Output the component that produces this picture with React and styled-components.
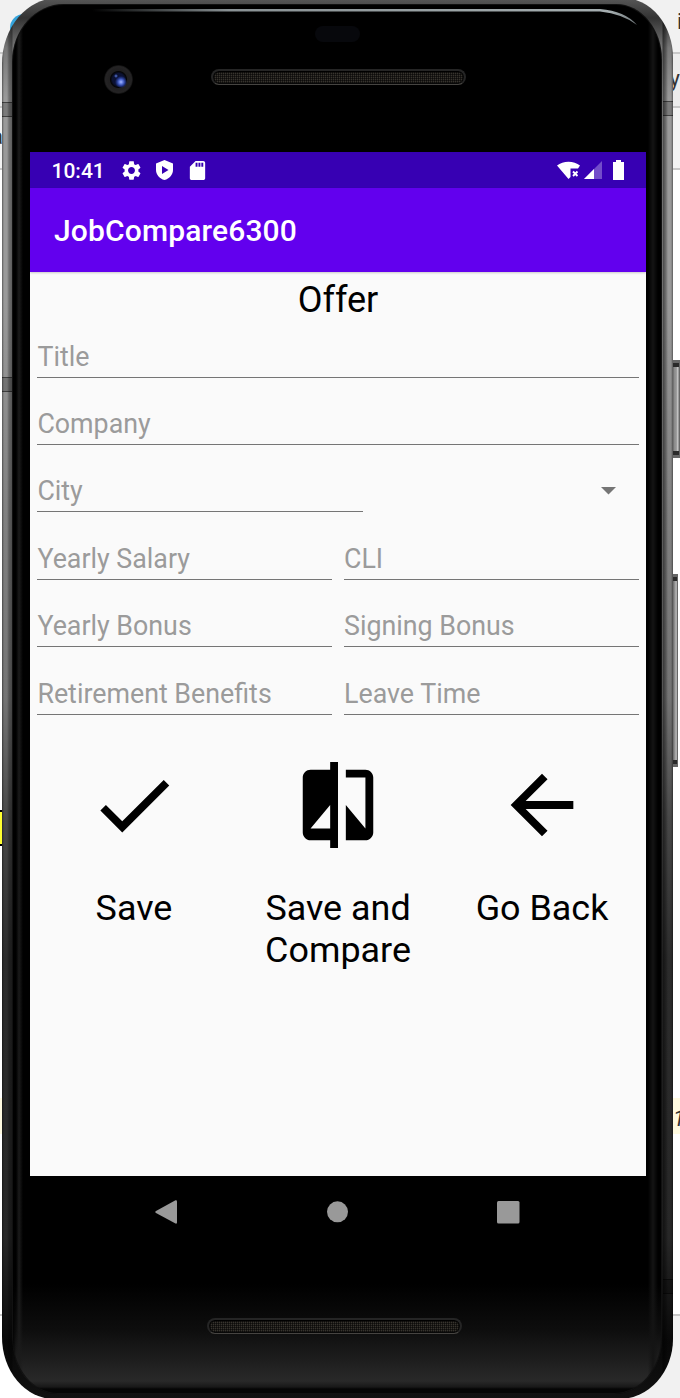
import React from "react";
import styled, { createGlobalStyle } from "styled-components";

const GlobalStyle = createGlobalStyle`
  *, *::before, *::after { box-sizing: border-box; }
  body { margin: 0; background: #fff; font-family: Roboto, "Liberation Sans", sans-serif; }
`;

const Desktop = styled.main`
  display: grid;
  width: 680px;
  height: 1398px;
  overflow: hidden;
  & > * { grid-area: 1 / 1; }
`;

const Backdrop = styled.div`
  display: flex;
  flex-direction: column;
  width: 680px;
`;

const Band = styled.div`
  flex: none;
  display: flex;
  justify-content: space-between;
  align-items: ${(p) => p.$align || "center"};
  height: ${(p) => p.$h}px;
  background: ${(p) => p.$bg || "#fff"};
  border-bottom: ${(p) => (p.$line ? "2px solid #c8c8c8" : "0")};
  font-size: 22px;
  line-height: 22px;
  color: #333;
`;

const AppDot = styled.span`
  width: 28px;
  height: 28px;
  margin: 14px 0 0 10px;
  border-radius: 50%;
  background: #35a4dc;
`;

const Sliver = styled.span`
  display: flex;
  justify-content: ${(p) => (p.$end ? "flex-end" : "flex-start")};
  width: ${(p) => p.$w || 3}px;
  height: 24px;
  margin-top: ${(p) => p.$top || 0}px;
  overflow: hidden;
  font-style: ${(p) => (p.$italic ? "italic" : "normal")};
`;

const Marker = styled.span`
  width: 3px;
  height: 36px;
  background: #ffff30;
  border: solid #000;
  border-width: 2px 0;
`;

const Phone = styled.div`
  position: relative;
  width: 671px;
  height: 1401px;
  margin: -2px 0 0 2px;
  padding: 6px 11px 5px 10px;
  border-radius: 56px 50px 54px 52px / 66px 60px 60px 62px;
  background:
    linear-gradient(90deg, #0006 0, #0000 2px, #0000 5px, #0004 7px, #0006 10px, #0000 11px, #0000 660px, #0008 661px, #0004 664px, #0000 666px, #0000 669px, #0006 671px),
    linear-gradient(#585858 0, #333 20px, #777 50px, #999 100px, #999 300px, #808080 520px, #747474 700px, #484848 820px, #2c2c2c 960px, #272727 1240px, #080808 1345px, #111 1401px);
`;

const Seam = styled.i`
  position: absolute;
  left: ${(p) => p.$x}px;
  top: ${(p) => p.$y}px;
  width: 10px;
  height: 15px;
  background: #0003;
  border: solid #0007;
  border-width: 1px 0;
`;

const SideKey = styled.i`
  position: absolute;
  left: 671px;
  top: ${(p) => p.$y}px;
  width: ${(p) => p.$w}px;
  height: ${(p) => p.$h}px;
  background: linear-gradient(90deg, #666 0, #999 2px, #8c8c8c 50%, #ccc 80%, #777);
  border: solid #666;
  border-width: 3px 1px 3px 0;
  box-shadow: inset 0 4px #2a2a2a, inset 0 -4px #2a2a2a;
`;

const Glass = styled.div`
  position: relative;
  display: flex;
  flex-direction: column;
  align-items: flex-start;
  height: 1390px;
  padding-left: 18px;
  overflow: hidden;
  border-radius: 52px 46px 48px 46px / 58px 56px 56px 56px;
  background:
    linear-gradient(90deg, #000 0, #0000 4px, #1b1b1b 7px, #0000 11px, #0000 636px, #141414 641px, #0000 646px),
    linear-gradient(#000 0, #000 1280px, #0d0d0d 1325px, #1d1d1d 1355px, #292929 1377px, #181818 1383px, #050505 1385px);
  box-shadow: inset 0 0 0 1px #111;
`;

const Shine = styled.svg`
  position: absolute;
  left: 0;
  top: 0;
`;

const TopBezel = styled.header`
  width: 616px;
  height: 148px;
  padding-top: 22px;
`;

const Sensor = styled.div`
  width: 45px;
  height: 16px;
  margin-left: 285px;
  border-radius: 8px;
  background: #07080c;
`;

const EarRow = styled.div`
  display: flex;
  align-items: center;
  gap: 78px;
  height: 28px;
  margin: 23px 0 0 74px;
`;

const Camera = styled.div`
  flex: none;
  width: 29px;
  height: 29px;
  border-radius: 50%;
  background:
    radial-gradient(circle at 17px 17px, #a9baff 0, #5b76dc 2px, #24388c 4px, #0000 6px),
    radial-gradient(circle at 12px 11px, #5a7be0 0, #0000 2px),
    radial-gradient(circle, #0a1034 0, #0c1233 6px, #050505 8px, #201f20 9px, #242324 13px, #0c0c0c 14.5px);
`;

const Speaker = styled.div`
  width: 255px;
  height: 16px;
  margin-bottom: ${(p) => p.$lift || 0}px;
  border: 2px solid #252525;
  border-bottom: 1px solid #464441;
  border-radius: 8px;
  background:
    repeating-linear-gradient(90deg, #0000 0 1px, #0008 1px 2px),
    repeating-linear-gradient(#37342e 0 1px, #1c1a17 1px 2px);
  box-shadow: inset 0 1px 1px #000, inset 0 0 0 1px #080808;
`;

const Screen = styled.section`
  width: 616px;
  height: 1024px;
  background: #fafafa;
`;

const StatusBar = styled.div`
  display: flex;
  align-items: center;
  height: 36px;
  padding: 0 22px 0 21.5px;
  background: #3700b3;
  color: #fff;
`;

const Clock = styled.span`
  width: 68.5px;
  font-size: 21px;
  font-weight: 500;
  line-height: 36px;
  letter-spacing: 0;
  padding-top: 1px;
`;

const StatusIcons = styled.div`
  display: flex;
  align-items: center;
  gap: ${(p) => p.$gap}px;
  margin-left: ${(p) => (p.$right ? "auto" : "0")};
  svg { display: block; fill: currentColor; }
`;

const AppBar = styled.div`
  height: 84px;
  padding-left: 24px;
  background: #6200ee;
  color: #fff;
  font-size: 30px;
  font-weight: 500;
  letter-spacing: 0.15px;
  line-height: 86px;
  box-shadow: 0 1px 2px #0003;
`;

const Heading = styled.h1`
  margin: 0;
  padding-top: 7px;
  font-size: 36px;
  font-weight: 400;
  line-height: 42px;
  text-align: center;
  color: #000;
`;

const Form = styled.form`
  display: flex;
  flex-direction: column;
  margin-top: -1.3px;
  padding: 0 7.4px;
`;

const Row = styled.div`
  display: grid;
  grid-template-columns: ${(p) => p.$cols || "1fr"};
  column-gap: 12px;
  height: 67.4px;
`;

const Field = styled.label`
  height: 58px;
  padding: 21px 0 0 0;
  border-bottom: 1.5px solid #757575;
  font-size: 26.8px;
  line-height: 32px;
  white-space: nowrap;
  color: #9b9b9b;
`;

const SpinnerBox = styled.div`
  display: flex;
  justify-content: flex-end;
  padding: 32.4px 23px 0 0;
  svg { fill: #757575; }
`;

const Actions = styled.div`
  display: grid;
  grid-template-columns: repeat(3, 204px);
  justify-content: center;
  margin-top: 33.6px;
`;

const Action = styled.button`
  display: flex;
  flex-direction: column;
  align-items: center;
  justify-content: flex-start;
  padding: 0;
  border: 0;
  background: none;
  color: #000;
  font: 400 35.9px/42px Roboto, "Liberation Sans", sans-serif;
  svg { width: 94px; height: 94px; fill: #000; }
  span { width: 170px; margin-top: 35.5px; }
`;

const NavBar = styled.nav`
  display: flex;
  align-items: center;
  justify-content: space-between;
  width: 616px;
  height: 72px;
  padding: 0 126px 0 125px;
  svg { fill: #999; }
`;

const Chin = styled.footer`
  padding: 70px 0 0 176.5px;
`;

const icons = {
  check: "M9 16.17L4.83 12l-1.42 1.41L9 19 21 7l-1.41-1.41z",
  compare:
    "M10 3H5c-1.1 0-2 .9-2 2v14c0 1.1.9 2 2 2h5v2h2V1h-2v2zm0 15H5l5-6v6zm9-15h-5v2h5v13l-5-6v9h5c1.1 0 2-.9 2-2V5c0-1.1-.9-2-2-2z",
  back: "M20 11H7.83l5.59-5.59L12 4l-8 8 8 8 1.41-1.41L7.83 13H20v-2z",
  gear:
    "M19.14 12.94c.04-.3.06-.61.06-.94 0-.32-.02-.64-.07-.94l2.03-1.58c.18-.14.23-.41.12-.61l-1.92-3.32c-.12-.22-.37-.29-.59-.22l-2.39.96c-.5-.38-1.03-.7-1.62-.94L14.4 2.81c-.04-.24-.24-.41-.48-.41h-3.84c-.24 0-.43.17-.47.41l-.36 2.54c-.59.24-1.13.57-1.62.94l-2.39-.96c-.22-.08-.47 0-.59.22L2.74 8.87c-.12.21-.08.47.12.61l2.03 1.58c-.05.3-.09.63-.09.94s.02.64.07.94l-2.03 1.58c-.18.14-.23.41-.12.61l1.92 3.32c.12.22.37.29.59.22l2.39-.96c.5.38 1.03.7 1.62.94l.36 2.54c.05.24.24.41.48.41h3.84c.24 0 .44-.17.47-.41l.36-2.54c.59-.24 1.13-.56 1.62-.94l2.39.96c.22.08.47 0 .59-.22l1.92-3.32c.12-.22.07-.47-.12-.61l-2.01-1.58zM12 15.6c-1.98 0-3.6-1.62-3.6-3.6s1.62-3.6 3.6-3.6 3.6 1.62 3.6 3.6-1.62 3.6-3.6 3.6z",
  sd: "M18 2h-8L4.02 8 4 20c0 1.1.9 2 2 2h12c1.1 0 2-.9 2-2V4c0-1.1-.9-2-2-2zm-6 6h-2V4h2v4zm3 0h-2V4h2v4zm3 0h-2V4h2v4z",
};

const Icon = ({ name, size }) => (
  <svg viewBox="0 0 24 24" width={size} height={size}>
    <path d={icons[name]} />
  </svg>
);

const actions = [
  { icon: "check", label: "Save" },
  { icon: "compare", label: "Save and Compare" },
  { icon: "back", label: "Go Back" },
];

const pairs = [
  ["Yearly Salary", "CLI"],
  ["Yearly Bonus", "Signing Bonus"],
  ["Retirement Benefits", "Leave Time"],
];

export default function App() {
  return (
    <>
      <GlobalStyle />
      <Desktop>
        <Backdrop>
          <Band $h={54} $bg="#f1f1f1" $line $align="flex-start">
            <AppDot />
            <Sliver $w={3} $top={11}>i</Sliver>
          </Band>
          <Band $h={54} $bg="#ececec" $line>
            <span />
            <Sliver $w={8} $end>y</Sliver>
          </Band>
          <Band $h={62} $bg="#f3f3f3" $line><Sliver $end>a</Sliver></Band>
          <Band $h={640} />
          <Band $h={36}><Marker /></Band>
          <Band $h={252} />
          <Band $h={36} $bg="#fffae0">
            <span />
            <Sliver $w={7} $top={8} $italic>1</Sliver>
          </Band>
          <Band $h={182} $bg="#fff" $line />
          <Band $h={82} $bg="linear-gradient(90deg, #fff 50%, #f1f1f1 50%)" />
        </Backdrop>
        <Phone>
          <SideKey $y={362} $w={7} $h={98} />
          <SideKey $y={576} $w={5} $h={193} />
          <Seam $x={0} $y={104} />
          <Seam $x={661} $y={103} />
          <Seam $x={0} $y={379} />
          <Seam $x={661} $y={1281} />
          <Glass>
            <Shine width="650" height="40">
              <defs>
                <linearGradient id="edge" x1="0" x2="1">
                  <stop offset="0" stopColor="#899194" stopOpacity="0" />
                  <stop offset=".25" stopColor="#899194" />
                  <stop offset=".95" stopColor="#a5aeb0" />
                  <stop offset="1" stopColor="#70777a" />
                </linearGradient>
              </defs>
              <path d="M80 5H588Q613 7 625 21Q611 10 588 7.500H80z" fill="url(#edge)" />
            </Shine>
            <TopBezel>
              <Sensor />
              <EarRow>
                <Camera />
                <Speaker $lift={4} />
              </EarRow>
            </TopBezel>
            <Screen>
              <StatusBar>
                <Clock>10:41</Clock>
                <StatusIcons $gap={12}>
                  <Icon name="gear" size={23} />
                  <svg width="19" height="22" viewBox="0 0 19 22">
                    <path fillRule="evenodd" d="M9.500 1L18 4.500V11c0 4.500-3.500 8.700-8.500 10C4.500 19.700 1 15.500 1 11V4.500zM7 7v8l6.500-4z" />
                  </svg>
                  <Icon name="sd" size={23} />
                </StatusIcons>
                <StatusIcons $right $gap={4}>
                  <svg width="23" height="20" viewBox="0 0 23 20">
                    <path d="M0 5.500C6 .4 17 .4 23 5.500L21 8.500H13.500V17L11.500 19z" />
                    <path d="M16 11.500L20.500 16M20.500 11.500L16 16" stroke="#fff" strokeWidth="1.900" />
                  </svg>
                  <svg width="18" height="18" viewBox="0 0 18 18">
                    <path d="M18 0V18H0z" opacity=".3" />
                    <path d="M10 8V18H0z" />
                  </svg>
                  <svg width="18" height="20" viewBox="0 0 18 20">
                    <path d="M10 0h5v2h3v18H7V2h3z" />
                  </svg>
                </StatusIcons>
              </StatusBar>
              <AppBar>JobCompare6300</AppBar>
              <Heading>Offer</Heading>
              <Form>
                <Row><Field>Title</Field></Row>
                <Row><Field>Company</Field></Row>
                <Row $cols="325.5px 1fr">
                  <Field>City</Field>
                  <SpinnerBox>
                    <svg width="15" height="8" viewBox="0 0 15 8"><path d="M0 0H15L7.500 7.500z" /></svg>
                  </SpinnerBox>
                </Row>
                {pairs.map(([left, right]) => (
                  <Row key={left} $cols="1fr 1fr">
                    <Field>{left}</Field>
                    <Field>{right}</Field>
                  </Row>
                ))}
              </Form>
              <Actions>
                {actions.map((a) => (
                  <Action key={a.label}>
                    <Icon name={a.icon} size={94} />
                    <span>{a.label}</span>
                  </Action>
                ))}
              </Actions>
            </Screen>
            <NavBar>
              <svg width="22" height="24" viewBox="0 0 22 24"><path d="M20.500.3Q22 0 22 1.500V22.500Q22 24 20.500 23.500L1 13Q-.5 12 1 11z" /></svg>
              <svg width="22" height="22"><circle cx="11.500" cy="10.800" r="10.500" /></svg>
              <svg width="23" height="23"><rect width="22.500" height="22.500" rx="1.500" /></svg>
            </NavBar>
            <Chin><Speaker /></Chin>
          </Glass>
        </Phone>
      </Desktop>
    </>
  );
}
